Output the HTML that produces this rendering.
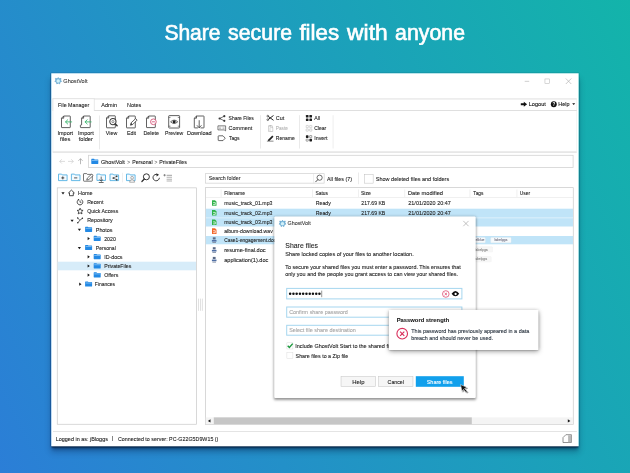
<!DOCTYPE html>
<html><head><meta charset="utf-8"><title>GhostVolt</title>
<style>
html,body{margin:0;padding:0;}
body{width:630px;height:473px;overflow:hidden;position:relative;font-family:"Liberation Sans",sans-serif;
background:linear-gradient(64deg, #2b7ed7 0%, #13b4aa 100%);}
#s{position:absolute;left:0;top:0;width:6300px;height:4730px;transform:scale(0.1);transform-origin:0 0;}
.b{position:absolute;box-sizing:border-box;}
.t{position:absolute;white-space:nowrap;-webkit-text-stroke-width:1px;line-height:100px;height:100px;transform-origin:0 50%;}
svg{overflow:visible;}
</style></head><body><div id="s">
<div class="t" style="font-size:220px;color:#fff;left:1645.0px;top:273.8px;transform:scaleX(0.9522);line-height:400px;height:400px;margin-top:-150px;-webkit-text-stroke-width:6.5px;">Share</div>
<div class="t" style="font-size:220px;color:#fff;left:2281.0px;top:273.8px;transform:scaleX(0.9692);line-height:400px;height:400px;margin-top:-150px;-webkit-text-stroke-width:6.5px;">secure</div>
<div class="t" style="font-size:220px;color:#fff;left:2994.0px;top:273.8px;transform:scaleX(1.0147);line-height:400px;height:400px;margin-top:-150px;-webkit-text-stroke-width:6.5px;">files</div>
<div class="t" style="font-size:220px;color:#fff;left:3471.0px;top:273.8px;transform:scaleX(1.0377);line-height:400px;height:400px;margin-top:-150px;-webkit-text-stroke-width:6.5px;">with</div>
<div class="t" style="font-size:220px;color:#fff;left:3951.0px;top:273.8px;transform:scaleX(0.9698);line-height:400px;height:400px;margin-top:-150px;-webkit-text-stroke-width:6.5px;">anyone</div>
<div class="b" style="left:513.0px;top:733.0px;width:5273.0px;height:3730.0px;background:#fff;box-shadow:0 -5px 6px rgba(0,45,85,.5),-6px 0 6px rgba(0,40,85,.4),0 14px 10px -3px rgba(0,25,60,.75),0 34px 30px -4px rgba(0,25,60,.6),0 60px 60px rgba(0,20,60,.3),0 0 14px rgba(0,20,55,.28);"></div>
<svg class="b" style="left:547.0px;top:773.0px;" width="70.0" height="70.0" viewBox="0 0 7 7"><path d="M3.5 0.3 L4.6 1.5 L6.3 1.1 L5.9 2.9 L6.9 4.1 L5.3 4.8 L4.9 6.6 L3.5 5.7 L2.1 6.6 L1.7 4.8 L0.1 4.1 L1.1 2.9 L0.7 1.1 L2.4 1.5 Z" fill="#7db9dc" stroke="#4e97c4" stroke-width="0.55" stroke-linejoin="round"/><circle cx="3.5" cy="3.7" r="1.7" fill="#d2f1fa"/></svg>
<div class="t" style="font-size:60px;color:#3a3a3a;left:633.0px;top:759.2px;transform:scaleX(0.9302);">GhostVolt</div>
<div class="b" style="left:5247.0px;top:809.0px;width:45.0px;height:6.0px;background:#b0b0b0;"></div>
<div class="b" style="left:5447.0px;top:787.0px;width:50.0px;height:50.0px;border:5px solid #b0b0b0;"></div>
<svg class="b" style="left:5658.0px;top:785.0px;" width="55.0" height="55.0" viewBox="0 0 5.5 5.5"><path d="M0 0 L5.5 5.5 M5.5 0 L0 5.5" stroke="#a8a8a8" stroke-width="0.6"/></svg>
<div class="b" style="left:527.0px;top:986.0px;width:5241.0px;height:539.0px;border:5px solid #d2d2d2;border-left-color:#e6e6e6;border-right-color:#ececec;border-bottom:9px solid #d0d0d0;border-top-width:7px;"></div>
<div class="b" style="left:530.0px;top:1102.0px;width:5238.0px;height:7.0px;background:#d2d2d2;"></div>
<div class="b" style="left:527.0px;top:986.0px;width:417.0px;height:124.0px;background:#fff;border:5px solid #d2d2d2;border-bottom:none;"></div>
<div class="t" style="font-size:60px;color:#222;left:580.0px;top:999.2px;transform:scaleX(0.8910);">File Manager</div>
<div class="t" style="font-size:60px;color:#222;left:1013.0px;top:999.2px;transform:scaleX(0.9231);">Admin</div>
<div class="t" style="font-size:60px;color:#222;left:1270.0px;top:999.2px;transform:scaleX(0.9123);">Notes</div>
<svg class="b" style="left:5208.0px;top:1016.0px;" width="64.0" height="52.0" viewBox="0 0 6.4 5.2"><path d="M0 1.6 H3 V0.1 L6.3 2.6 L3 5.1 V3.6 H0 Z" fill="#111"/></svg>
<div class="t" style="font-size:60px;color:#111;left:5287.0px;top:989.2px;transform:scaleX(0.9318);">Logout</div>
<svg class="b" style="left:5508.0px;top:1013.0px;" width="60.0" height="60.0" viewBox="0 0 6 6"><circle cx="3" cy="3" r="2.95" fill="#111"/><text x="3" y="4.8" font-size="4.6" font-weight="bold" fill="#fff" text-anchor="middle" font-family="Liberation Sans">?</text></svg>
<div class="t" style="font-size:60px;color:#111;left:5583.0px;top:989.2px;transform:scaleX(0.9076);">Help</div>
<svg class="b" style="left:5722.0px;top:1033.0px;" width="30.0" height="20.0" viewBox="0 0 3 2"><path d="M0 0 H3 L1.5 1.8 Z" fill="#111"/></svg>
<svg class="b" style="left:611.0px;top:1156.0px;" width="96.0" height="124.0" viewBox="0 0 9.6 12.4"><path d="M2.6 0.4 H8.799999999999999 Q9.2 0.4 9.2 0.8 V11.6 Q9.2 12.0 8.799999999999999 12.0 H0.8 Q0.4 12.0 0.4 11.6 V2.6 Z M2.6 0.4 V2.6 H0.4" fill="#fff" stroke="#3a3a3a" stroke-width="0.8" stroke-linejoin="round"/><path d="M10.6 6.3 H4.6 M6.6 4.2 L4.4 6.3 L6.6 8.4" fill="none" stroke="#35b56a" stroke-width="0.85" stroke-linecap="round" stroke-linejoin="round"/></svg>
<div class="t" style="font-size:60px;color:#222;left:573.5px;top:1279.2px;transform:scaleX(0.9233);">Import</div>
<div class="t" style="font-size:60px;color:#222;left:601.0px;top:1339.2px;transform:scaleX(0.9560);">files</div>
<svg class="b" style="left:800.0px;top:1156.0px;" width="106.0" height="124.0" viewBox="0 0 10.6 12.4"><path d="M3.6 0.4 H9.8 Q10.2 0.4 10.2 0.8 V11.6 Q10.2 12 9.8 12 H0.8 Q0.4 12 0.4 11.6 V9.8 Q0.4 9.3 0.9 9.3 H1.6 V2.6 Z M3.6 0.4 V2.6 H1.6" fill="#fff" stroke="#3a3a3a" stroke-width="0.8" stroke-linejoin="round"/><path d="M11.2 6.3 H5.2 M7.2 4.2 L5 6.3 L7.2 8.4" fill="none" stroke="#35b56a" stroke-width="0.85" stroke-linecap="round" stroke-linejoin="round"/></svg>
<div class="t" style="font-size:60px;color:#222;left:779.5px;top:1279.2px;transform:scaleX(0.9233);">Import</div>
<div class="t" style="font-size:60px;color:#222;left:787.0px;top:1339.2px;transform:scaleX(0.9461);">folder</div>
<div class="b" style="left:994.0px;top:1155.0px;width:5.0px;height:339.0px;background:#d4d4d4;"></div>
<svg class="b" style="left:1061.0px;top:1154.0px;" width="96.0" height="128.0" viewBox="0 0 9.6 12.8"><path d="M2.6 0.4 H8.799999999999999 Q9.2 0.4 9.2 0.8 V12.0 Q9.2 12.4 8.799999999999999 12.4 H0.8 Q0.4 12.4 0.4 12.0 V2.6 Z M2.6 0.4 V2.6 H0.4" fill="#fff" stroke="#3a3a3a" stroke-width="0.8" stroke-linejoin="round"/><circle cx="6.8" cy="6.2" r="3.1" fill="#fff" stroke="#3a3a3a" stroke-width="1.05"/><circle cx="6.8" cy="6.2" r="1.1" fill="none" stroke="#3a3a3a" stroke-width="0.55"/><path d="M9.1 8.5 L11 10.4" stroke="#3a3a3a" stroke-width="1.5" stroke-linecap="round"/></svg>
<div class="t" style="font-size:60px;color:#222;left:1057.5px;top:1279.2px;transform:scaleX(0.8917);">View</div>
<svg class="b" style="left:1261.0px;top:1156.0px;" width="96.0" height="127.0" viewBox="0 0 9.6 12.7"><path d="M2.6 0.4 H8.799999999999999 Q9.2 0.4 9.2 0.8 V11.899999999999999 Q9.2 12.299999999999999 8.799999999999999 12.299999999999999 H0.8 Q0.4 12.299999999999999 0.4 11.899999999999999 V2.6 Z M2.6 0.4 V2.6 H0.4" fill="#fff" stroke="#3a3a3a" stroke-width="0.8" stroke-linejoin="round"/><path d="M4.4 9.6 L5 7.2 L9.6 3 L11 4.5 L6.6 8.9 Z" fill="#fff" stroke="#3a3a3a" stroke-width="0.8" stroke-linejoin="round"/><path d="M4.4 9.6 L5 7.2 L6.6 8.9 Z" fill="#3a3a3a"/></svg>
<div class="t" style="font-size:60px;color:#222;left:1269.0px;top:1279.2px;transform:scaleX(0.8898);">Edit</div>
<svg class="b" style="left:1461.0px;top:1156.0px;" width="96.0" height="124.0" viewBox="0 0 9.6 12.4"><path d="M2.6 0.4 H8.799999999999999 Q9.2 0.4 9.2 0.8 V11.6 Q9.2 12.0 8.799999999999999 12.0 H0.8 Q0.4 12.0 0.4 11.6 V2.6 Z M2.6 0.4 V2.6 H0.4" fill="#fff" stroke="#3a3a3a" stroke-width="0.8" stroke-linejoin="round"/><circle cx="7.3" cy="6.2" r="2.85" fill="#fff" stroke="#d24a70" stroke-width="0.85"/><path d="M5.8 6.2 H8.8" stroke="#d24a70" stroke-width="0.85"/></svg>
<div class="t" style="font-size:60px;color:#222;left:1434.5px;top:1279.2px;transform:scaleX(0.8937);">Delete</div>
<svg class="b" style="left:1683.0px;top:1152.0px;" width="117.0" height="132.0" viewBox="0 0 11.7 13.2"><rect x="0.4" y="0.4" width="10.9" height="12.4" rx="0.6" fill="#fff" stroke="#3a3a3a" stroke-width="0.8"/><path d="M0.4 2.2 H2.2 M9.5 2.2 H11.3 M0.4 11 H2.2 M9.5 11 H11.3" stroke="#3a3a3a" stroke-width="0.6"/><path d="M2.3 6.6 Q5.85 3.2 9.4 6.6 Q5.85 10 2.3 6.6 Z" fill="#fff" stroke="#3a3a3a" stroke-width="0.75"/><circle cx="5.85" cy="6.6" r="1.5" fill="#222"/></svg>
<div class="t" style="font-size:60px;color:#222;left:1649.5px;top:1279.2px;transform:scaleX(0.8575);">Preview</div>
<svg class="b" style="left:1939.0px;top:1156.0px;" width="105.0" height="127.0" viewBox="0 0 10.5 12.7"><path d="M4 12.3 H0.8 Q0.4 12.3 0.4 11.9 V2.6 L2.6 0.4 H9.7 Q10.1 0.4 10.1 0.8 V11.9 Q10.1 12.3 9.7 12.3 H6.6 M2.6 0.4 V2.6 H0.4" fill="none" stroke="#3a3a3a" stroke-width="0.8" stroke-linejoin="round"/><path d="M5.3 5 V12 M3.3 10 L5.3 12.2 L7.3 10" fill="none" stroke="#3a3a3a" stroke-width="0.8" stroke-linecap="round" stroke-linejoin="round"/></svg>
<div class="t" style="font-size:60px;color:#222;left:1869.5px;top:1279.2px;transform:scaleX(0.9257);">Download</div>
<svg class="b" style="left:2183.0px;top:1151.0px;" width="74.0" height="68.0" viewBox="0 0 7.4 6.8"><path d="M1.3 3.4 L6 1.1 M1.3 3.4 L6 5.7" stroke="#3a3a3a" stroke-width="0.7"/><circle cx="1.3" cy="3.4" r="1.1" fill="#3a3a3a"/><circle cx="6" cy="1.1" r="1.1" fill="#3a3a3a"/><circle cx="6" cy="5.7" r="1.1" fill="#3a3a3a"/></svg>
<div class="t" style="font-size:60px;color:#222;left:2286.0px;top:1129.2px;transform:scaleX(0.8304);">Share Files</div>
<svg class="b" style="left:2176.0px;top:1255.0px;" width="84.0" height="58.0" viewBox="0 0 8.4 5.8"><path d="M0.35 0.35 H8 V5.4 L6.6 4.4 H0.35 Z" fill="#fff" stroke="#3a3a3a" stroke-width="0.65" stroke-linejoin="round"/><path d="M1.4 1.7 H3.6 M1.4 3 H3.6 M4.9 1.7 H6.9 M4.9 3 H6.9" stroke="#888" stroke-width="0.5"/></svg>
<div class="t" style="font-size:60px;color:#222;left:2286.0px;top:1229.2px;transform:scaleX(0.9113);">Comment</div>
<svg class="b" style="left:2178.0px;top:1354.0px;" width="78.0" height="56.0" viewBox="0 0 7.8 5.6"><path d="M0.9 0.4 H5.2 L7.4 2.8 L5.2 5.2 H0.9 Q0.4 5.2 0.4 4.7 V0.9 Q0.4 0.4 0.9 0.4 Z" fill="#fff" stroke="#3a3a3a" stroke-width="0.75" stroke-linejoin="round"/></svg>
<div class="t" style="font-size:60px;color:#222;left:2289.0px;top:1329.2px;transform:scaleX(0.8364);">Tags</div>
<div class="b" style="left:2605.0px;top:1152.0px;width:5.0px;height:333.0px;background:#d4d4d4;"></div>
<svg class="b" style="left:2667.0px;top:1150.0px;" width="70.0" height="58.0" viewBox="0 0 7 5.8"><path d="M1.7 1.5 L6.8 5.3 M1.7 4.3 L6.8 0.5" stroke="#1c1c1c" stroke-width="0.95"/><circle cx="1.1" cy="1.1" r="0.85" fill="none" stroke="#1c1c1c" stroke-width="0.6"/><circle cx="1.1" cy="4.7" r="0.85" fill="none" stroke="#1c1c1c" stroke-width="0.6"/></svg>
<div class="t" style="font-size:60px;color:#222;left:2758.0px;top:1129.2px;transform:scaleX(0.9104);">Cut</div>
<svg class="b" style="left:2680.0px;top:1250.0px;" width="50.0" height="66.0" viewBox="0 0 5 6.6"><rect x="0.3" y="0.9" width="4.2" height="5.3" fill="#fff" stroke="#b5b5b5" stroke-width="0.55"/><rect x="1.4" y="0.2" width="2" height="1.3" fill="#b5b5b5"/><rect x="2" y="2.8" width="2.9" height="3.6" fill="#fff" stroke="#b5b5b5" stroke-width="0.5"/></svg>
<div class="t" style="font-size:60px;color:#b3b3b3;left:2758.0px;top:1229.2px;transform:scaleX(0.7821);">Paste</div>
<svg class="b" style="left:2667.0px;top:1352.0px;" width="74.0" height="62.0" viewBox="0 0 7.4 6.2"><path d="M1.6 4.4 L5.6 0.4 L6.8 1.6 L2.9 5.5 L1.2 5.9 Z" fill="#222"/><path d="M0.2 5.95 H6.8" stroke="#222" stroke-width="0.55"/></svg>
<div class="t" style="font-size:60px;color:#222;left:2758.0px;top:1329.2px;transform:scaleX(0.8334);">Rename</div>
<div class="b" style="left:2995.0px;top:1152.0px;width:5.0px;height:333.0px;background:#d4d4d4;"></div>
<svg class="b" style="left:3058.0px;top:1148.0px;" width="64.0" height="64.0" viewBox="0 0 6.4 6.4"><rect x="0.1" y="0.1" width="2.6" height="2.6" rx="0.6" fill="#1c1c1c"/><rect x="3.6" y="0.1" width="2.6" height="2.6" rx="0.6" fill="#1c1c1c"/><rect x="0.1" y="3.6" width="2.6" height="2.6" rx="0.6" fill="#1c1c1c"/><rect x="3.6" y="3.6" width="2.6" height="2.6" rx="0.6" fill="#1c1c1c"/></svg>
<div class="t" style="font-size:60px;color:#222;left:3142.0px;top:1129.2px;transform:scaleX(0.8698);">All</div>
<svg class="b" style="left:3058.0px;top:1251.0px;" width="64.0" height="64.0" viewBox="0 0 6.4 6.4"><rect x="0.35" y="0.35" width="2.2" height="2.2" rx="0.3" fill="#fff" stroke="#aaa" stroke-width="0.45"/><rect x="3.85" y="0.35" width="2.2" height="2.2" rx="0.3" fill="#fff" stroke="#aaa" stroke-width="0.45"/><rect x="0.35" y="3.85" width="2.2" height="2.2" rx="0.3" fill="#fff" stroke="#aaa" stroke-width="0.45"/><rect x="3.85" y="3.85" width="2.2" height="2.2" rx="0.3" fill="#fff" stroke="#aaa" stroke-width="0.45"/></svg>
<div class="t" style="font-size:60px;color:#222;left:3142.0px;top:1229.2px;transform:scaleX(0.8369);">Clear</div>
<svg class="b" style="left:3058.0px;top:1352.0px;" width="64.0" height="64.0" viewBox="0 0 6.4 6.4"><rect x="0.1" y="0.1" width="2.6" height="2.6" rx="0.6" fill="#1c1c1c"/><rect x="3.85" y="0.35" width="2.1" height="2.1" rx="0.3" fill="#fff" stroke="#333" stroke-width="0.45"/><rect x="0.35" y="3.85" width="2.1" height="2.1" rx="0.3" fill="#fff" stroke="#333" stroke-width="0.45"/><rect x="3.6" y="3.6" width="2.6" height="2.6" rx="0.6" fill="#1c1c1c"/></svg>
<div class="t" style="font-size:60px;color:#222;left:3142.0px;top:1329.2px;transform:scaleX(0.8863);">Invert</div>
<div class="b" style="left:3328.0px;top:1152.0px;width:5.0px;height:333.0px;background:#dcdcdc;"></div>
<svg class="b" style="left:592.0px;top:1589.0px;" width="60.0" height="50.0" viewBox="0 0 6 5"><path d="M5.8 2.5 H0.5 M2.6 0.4 L0.5 2.5 L2.6 4.6" fill="none" stroke="#c4c4c4" stroke-width="0.6"/></svg>
<svg class="b" style="left:678.0px;top:1589.0px;" width="60.0" height="50.0" viewBox="0 0 6 5"><path d="M0.2 2.5 H5.5 M3.4 0.4 L5.5 2.5 L3.4 4.6" fill="none" stroke="#c4c4c4" stroke-width="0.6"/></svg>
<svg class="b" style="left:780.0px;top:1582.0px;" width="50.0" height="62.0" viewBox="0 0 5 6.2"><path d="M2.5 6 V0.5 M0.4 2.6 L2.5 0.5 L4.6 2.6" fill="none" stroke="#8a8a8a" stroke-width="0.6"/></svg>
<div class="b" style="left:880.0px;top:1549.0px;width:4855.0px;height:130.0px;border:8px solid #d3d3d3;background:#fff;"></div>
<svg class="b" style="left:913.0px;top:1588.0px;" width="70.0" height="52.0" viewBox="0 0 7 5.2"><path d="M0 0.5 Q0 0 0.5 0 H2.8000000000000003 L3.29 0.6 H6.6 Q7 0.6 7 1 V4.8 Q7 5.2 6.6 5.2 H0.4 Q0 5.2 0 4.8 Z" fill="#2389e4"/><rect x="0.5" y="1.2" width="6" height="0.8" fill="#8cc6f6"/></svg>
<div class="t" style="font-size:60px;color:#222;left:1009.0px;top:1569.2px;transform:scaleX(0.9225);">GhostVolt</div>
<div class="t" style="font-size:60px;color:#666;left:1273.0px;top:1569.2px;transform:scaleX(0.7991);">&gt;</div>
<div class="t" style="font-size:60px;color:#222;left:1322.0px;top:1569.2px;transform:scaleX(0.8615);">Personal</div>
<div class="t" style="font-size:60px;color:#666;left:1544.0px;top:1569.2px;transform:scaleX(0.7991);">&gt;</div>
<div class="t" style="font-size:60px;color:#222;left:1593.0px;top:1569.2px;transform:scaleX(0.8806);">PrivateFiles</div>
<svg class="b" style="left:580.0px;top:1736.0px;" width="96.0" height="75.0" viewBox="0 0 9.6 7.5"><path d="M0.5 0.5 H3.6 L4.2 1.3 H9.1 V7.0 H0.5 Z" fill="#f4fafe" stroke="#4daee2" stroke-width="0.85" stroke-linejoin="round"/><path d="M3.3 4.3 H6.3 M4.8 2.8 V5.8" stroke="#2a2a2a" stroke-width="0.8"/></svg>
<svg class="b" style="left:709.0px;top:1736.0px;" width="96.0" height="75.0" viewBox="0 0 9.6 7.5"><path d="M0.5 0.5 H3.6 L4.2 1.3 H9.1 V7.0 H0.5 Z" fill="#f4fafe" stroke="#4daee2" stroke-width="0.85" stroke-linejoin="round"/><path d="M3.2 4.3 H6.4" stroke="#2a2a2a" stroke-width="0.8"/></svg>
<svg class="b" style="left:831.0px;top:1732.0px;" width="106.0" height="86.0" viewBox="0 0 10.6 8.6"><path d="M0.4 0.9 Q0.4 0.4 0.9 0.4 H3.6 L4.3 1.2 H8.7 Q9.2 1.2 9.2 1.7 V7.5 Q9.2 8 8.7 8 H0.9 Q0.4 8 0.4 7.5 Z" fill="#fff" stroke="#4a4a4a" stroke-width="0.75" stroke-linejoin="round"/><path d="M3.6 6.9 L4.3 4.8 L8.6 0.9 L10 2.3 L5.8 6.3 Z" fill="#fff" stroke="#3a3a3a" stroke-width="0.7" stroke-linejoin="round"/></svg>
<svg class="b" style="left:964.0px;top:1736.0px;" width="96.0" height="73.0" viewBox="0 0 9.6 7.3"><path d="M0.5 0.5 H3.6 L4.2 1.3 H9.1 V6.8 H0.5 Z" fill="#f4fafe" stroke="#4daee2" stroke-width="0.85" stroke-linejoin="round"/><path d="M4.8 3 V7.6 M3 5.9 L4.8 7.7 L6.6 5.9 M2.4 8.9 H7.2" fill="none" stroke="#3a3a3a" stroke-width="0.75"/></svg>
<svg class="b" style="left:1095.0px;top:1736.0px;" width="96.0" height="75.0" viewBox="0 0 9.6 7.5"><path d="M0.5 0.5 H3.6 L4.2 1.3 H9.1 V7.0 H0.5 Z" fill="#f4fafe" stroke="#4daee2" stroke-width="0.85" stroke-linejoin="round"/><path d="M3.8 4.4 L7.2 2.7 M3.8 4.4 L7.2 6.1" stroke="#3a3a3a" stroke-width="0.6"/><circle cx="3.8" cy="4.4" r="0.85" fill="#3a3a3a"/><circle cx="7.2" cy="2.7" r="0.85" fill="#3a3a3a"/><circle cx="7.2" cy="6.1" r="0.85" fill="#3a3a3a"/></svg>
<div class="b" style="left:1225.0px;top:1728.0px;width:5.0px;height:96.0px;background:#dedede;"></div>
<svg class="b" style="left:1260.0px;top:1736.0px;" width="96.0" height="75.0" viewBox="0 0 9.6 7.5"><path d="M0.5 0.5 H3.6 L4.2 1.3 H9.1 V7.0 H0.5 Z" fill="#f4fafe" stroke="#4daee2" stroke-width="0.85" stroke-linejoin="round"/><circle cx="6.1" cy="4.2" r="1.35" fill="#fff" stroke="#777" stroke-width="0.6"/><path d="M3.6 8.6 Q3.6 6.2 6.1 6.2 Q8.6 6.2 8.6 8.6 Z" fill="#fff" stroke="#777" stroke-width="0.6"/></svg>
<svg class="b" style="left:1413.0px;top:1732.0px;" width="86.0" height="88.0" viewBox="0 0 8.6 8.8"><circle cx="5.1" cy="3.6" r="3" fill="none" stroke="#2a2a2a" stroke-width="0.95"/><path d="M3 5.8 L0.6 8.3" stroke="#2a2a2a" stroke-width="1.2" stroke-linecap="round"/></svg>
<svg class="b" style="left:1520.0px;top:1732.0px;" width="86.0" height="86.0" viewBox="0 0 8.6 8.6"><path d="M7.4 4.6 A3.2 3.2 0 1 1 5.6 1.5" fill="none" stroke="#2a2a2a" stroke-width="0.9"/><path d="M4.4 0 L7 1.6 L4.6 3.4 Z" fill="#2a2a2a"/></svg>
<svg class="b" style="left:1630.0px;top:1740.0px;" width="92.0" height="74.0" viewBox="0 0 9.2 7.4"><path d="M1.6 0 V2.4 M0.4 1.2 H2.8" stroke="#555" stroke-width="0.6"/><path d="M3.6 1.4 H9 M3.6 3.3 H9 M3.6 5.2 H9 M3.6 7 H9" stroke="#b4b4b4" stroke-width="1.1"/></svg>
<div class="b" style="left:2052.0px;top:1733.0px;width:1193.0px;height:102.0px;border:7px solid #d0d0d0;background:#fff;"></div>
<div class="b" style="left:3134.0px;top:1732.0px;width:5.0px;height:102.0px;background:#dedede;"></div>
<div class="t" style="font-size:60px;color:#333;left:2088.0px;top:1729.2px;transform:scaleX(0.8855);">Search folder</div>
<svg class="b" style="left:3152.0px;top:1746.0px;" width="74.0" height="76.0" viewBox="0 0 7.4 7.6"><circle cx="4.4" cy="3.1" r="2.6" fill="none" stroke="#333" stroke-width="0.7"/><path d="M2.6 5.1 L0.5 7.2" stroke="#333" stroke-width="0.9" stroke-linecap="round"/></svg>
<div class="t" style="font-size:60px;color:#222;left:3270.0px;top:1739.2px;transform:scaleX(0.8927);">All files (7)</div>
<div class="b" style="left:3584.0px;top:1725.0px;width:5.0px;height:117.0px;background:#d6d6d6;"></div>
<div class="b" style="left:3642.0px;top:1742.0px;width:92.0px;height:92.0px;border:5px solid #bdbdbd;background:#fff;"></div>
<div class="t" style="font-size:60px;color:#222;left:3758.0px;top:1739.2px;transform:scaleX(0.9169);">Show deleted files and folders</div>
<div class="b" style="left:569.0px;top:1875.0px;width:1398.0px;height:2371.0px;border:7px solid #c8c8c8;background:#fff;"></div>
<div class="b" style="left:576.0px;top:2616.6px;width:1384.0px;height:86.0px;background:#d7ecf9;"></div>
<svg class="b" style="left:614.0px;top:1923.0px;" width="32.0" height="24.0" viewBox="0 0 3.2 2.4"><path d="M0 0 H3.2 L1.6 2.3 Z" fill="#1a1a1a"/></svg>
<svg class="b" style="left:680.0px;top:1896.0px;" width="68.0" height="66.0" viewBox="0 0 6.8 6.6"><path d="M0.5 3.3 L3.4 0.5 L6.3 3.3 H5.3 V6.1 H1.5 V3.3 Z" fill="#fff" stroke="#2a2a2a" stroke-width="0.85" stroke-linejoin="round"/></svg>
<div class="t" style="font-size:60px;color:#222;left:780.0px;top:1879.2px;transform:scaleX(0.9060);">Home</div>
<svg class="b" style="left:767.0px;top:1987.2px;" width="66.0" height="68.0" viewBox="0 0 6.6 6.8"><path d="M4.6 0.9 A2.8 2.8 0 1 1 2 0.9" fill="none" stroke="#2a2a2a" stroke-width="0.85"/><path d="M3.3 1.6 V3.6 H4.7" fill="none" stroke="#2a2a2a" stroke-width="0.7"/><path d="M0.9 0.2 L2.6 0.5 L2 2 Z" fill="#2a2a2a"/></svg>
<div class="t" style="font-size:60px;color:#222;left:872.0px;top:1969.2px;transform:scaleX(0.8469);">Recent</div>
<svg class="b" style="left:767.0px;top:2077.4px;" width="68.0" height="66.0" viewBox="0 0 6.8 6.6"><path d="M3.4 0.5 L4.3 2.5 L6.4 2.7 L4.8 4.1 L5.3 6.2 L3.4 5.1 L1.5 6.2 L2 4.1 L0.4 2.7 L2.5 2.5 Z" fill="#fff" stroke="#2a2a2a" stroke-width="0.8" stroke-linejoin="round"/></svg>
<div class="t" style="font-size:60px;color:#222;left:872.0px;top:2059.2px;transform:scaleX(0.8636);">Quick Access</div>
<svg class="b" style="left:705.0px;top:2196.6px;" width="32.0" height="24.0" viewBox="0 0 3.2 2.4"><path d="M0 0 H3.2 L1.6 2.3 Z" fill="#1a1a1a"/></svg>
<svg class="b" style="left:767.0px;top:2171.6px;" width="66.0" height="64.0" viewBox="0 0 6.6 6.4"><path d="M1.2 5.6 L3.2 3 L1 0.8 M3.2 3 L5.6 1.2" fill="none" stroke="#222" stroke-width="0.7"/><circle cx="1" cy="0.8" r="0.7" fill="#222"/><circle cx="5.7" cy="1.1" r="0.7" fill="#222"/><circle cx="1.1" cy="5.6" r="0.7" fill="#222"/></svg>
<div class="t" style="font-size:60px;color:#222;left:872.0px;top:2149.2px;transform:scaleX(0.8926);">Repository</div>
<svg class="b" style="left:778.0px;top:2287.8px;" width="32.0" height="24.0" viewBox="0 0 3.2 2.4"><path d="M0 0 H3.2 L1.6 2.3 Z" fill="#1a1a1a"/></svg>
<svg class="b" style="left:851.0px;top:2266.8px;" width="70.0" height="52.0" viewBox="0 0 7 5.2"><path d="M0 0.5 Q0 0 0.5 0 H2.8000000000000003 L3.29 0.6 H6.6 Q7 0.6 7 1 V4.8 Q7 5.2 6.6 5.2 H0.4 Q0 5.2 0 4.8 Z" fill="#2389e4"/><rect x="0.5" y="1.2" width="6" height="0.8" fill="#8cc6f6"/></svg>
<div class="t" style="font-size:60px;color:#222;left:958.0px;top:2249.2px;transform:scaleX(0.8940);">Photos</div>
<svg class="b" style="left:876.0px;top:2370.0px;" width="24.0" height="32.0" viewBox="0 0 2.4 3.2"><path d="M0 0 L2.3 1.6 L0 3.2 Z" fill="#1a1a1a"/></svg>
<svg class="b" style="left:937.0px;top:2358.0px;" width="70.0" height="52.0" viewBox="0 0 7 5.2"><path d="M0 0.5 Q0 0 0.5 0 H2.8000000000000003 L3.29 0.6 H6.6 Q7 0.6 7 1 V4.8 Q7 5.2 6.6 5.2 H0.4 Q0 5.2 0 4.8 Z" fill="#2389e4"/><rect x="0.5" y="1.2" width="6" height="0.8" fill="#8cc6f6"/></svg>
<div class="t" style="font-size:60px;color:#222;left:1042.0px;top:2339.2px;transform:scaleX(0.8691);">2020</div>
<svg class="b" style="left:778.0px;top:2470.2px;" width="32.0" height="24.0" viewBox="0 0 3.2 2.4"><path d="M0 0 H3.2 L1.6 2.3 Z" fill="#1a1a1a"/></svg>
<svg class="b" style="left:851.0px;top:2449.2px;" width="70.0" height="52.0" viewBox="0 0 7 5.2"><path d="M0 0.5 Q0 0 0.5 0 H2.8000000000000003 L3.29 0.6 H6.6 Q7 0.6 7 1 V4.8 Q7 5.2 6.6 5.2 H0.4 Q0 5.2 0 4.8 Z" fill="#2389e4"/><rect x="0.5" y="1.2" width="6" height="0.8" fill="#8cc6f6"/></svg>
<div class="t" style="font-size:60px;color:#222;left:958.0px;top:2429.2px;transform:scaleX(0.8446);">Personal</div>
<svg class="b" style="left:876.0px;top:2552.4px;" width="24.0" height="32.0" viewBox="0 0 2.4 3.2"><path d="M0 0 L2.3 1.6 L0 3.2 Z" fill="#1a1a1a"/></svg>
<svg class="b" style="left:937.0px;top:2540.4px;" width="70.0" height="52.0" viewBox="0 0 7 5.2"><path d="M0 0.5 Q0 0 0.5 0 H2.8000000000000003 L3.29 0.6 H6.6 Q7 0.6 7 1 V4.8 Q7 5.2 6.6 5.2 H0.4 Q0 5.2 0 4.8 Z" fill="#2389e4"/><rect x="0.5" y="1.2" width="6" height="0.8" fill="#8cc6f6"/></svg>
<div class="t" style="font-size:60px;color:#222;left:1042.0px;top:2519.2px;transform:scaleX(0.8853);">ID-docs</div>
<svg class="b" style="left:876.0px;top:2643.6px;" width="24.0" height="32.0" viewBox="0 0 2.4 3.2"><path d="M0 0 L2.3 1.6 L0 3.2 Z" fill="#1a1a1a"/></svg>
<svg class="b" style="left:937.0px;top:2631.6px;" width="70.0" height="52.0" viewBox="0 0 7 5.2"><path d="M0 0.5 Q0 0 0.5 0 H2.8000000000000003 L3.29 0.6 H6.6 Q7 0.6 7 1 V4.8 Q7 5.2 6.6 5.2 H0.4 Q0 5.2 0 4.8 Z" fill="#2389e4"/><rect x="0.5" y="1.2" width="6" height="0.8" fill="#8cc6f6"/></svg>
<div class="t" style="font-size:60px;color:#222;left:1042.0px;top:2609.2px;transform:scaleX(0.8647);">PrivateFiles</div>
<svg class="b" style="left:876.0px;top:2734.8px;" width="24.0" height="32.0" viewBox="0 0 2.4 3.2"><path d="M0 0 L2.3 1.6 L0 3.2 Z" fill="#1a1a1a"/></svg>
<svg class="b" style="left:937.0px;top:2722.8px;" width="70.0" height="52.0" viewBox="0 0 7 5.2"><path d="M0 0.5 Q0 0 0.5 0 H2.8000000000000003 L3.29 0.6 H6.6 Q7 0.6 7 1 V4.8 Q7 5.2 6.6 5.2 H0.4 Q0 5.2 0 4.8 Z" fill="#2389e4"/><rect x="0.5" y="1.2" width="6" height="0.8" fill="#8cc6f6"/></svg>
<div class="t" style="font-size:60px;color:#222;left:1042.0px;top:2699.2px;transform:scaleX(0.8689);">Offers</div>
<svg class="b" style="left:792.0px;top:2826.0px;" width="24.0" height="32.0" viewBox="0 0 2.4 3.2"><path d="M0 0 L2.3 1.6 L0 3.2 Z" fill="#1a1a1a"/></svg>
<svg class="b" style="left:851.0px;top:2814.0px;" width="70.0" height="52.0" viewBox="0 0 7 5.2"><path d="M0 0.5 Q0 0 0.5 0 H2.8000000000000003 L3.29 0.6 H6.6 Q7 0.6 7 1 V4.8 Q7 5.2 6.6 5.2 H0.4 Q0 5.2 0 4.8 Z" fill="#2389e4"/><rect x="0.5" y="1.2" width="6" height="0.8" fill="#8cc6f6"/></svg>
<div class="t" style="font-size:60px;color:#222;left:948.0px;top:2789.2px;transform:scaleX(0.8297);">Finances</div>
<div class="b" style="left:1982.0px;top:2986.0px;width:8.0px;height:122.0px;background:#dadada;"></div>
<div class="b" style="left:2002.0px;top:2986.0px;width:8.0px;height:122.0px;background:#dadada;"></div>
<div class="b" style="left:2019.0px;top:2986.0px;width:8.0px;height:122.0px;background:#dadada;"></div>
<div class="b" style="left:2052.0px;top:1873.0px;width:3684.0px;height:2375.0px;border:7px solid #c8c8c8;background:#fff;"></div>
<div class="b" style="left:2058.0px;top:1974.0px;width:3672.0px;height:5.0px;background:#e0e0e0;"></div>
<div class="b" style="left:2208.0px;top:1895.0px;width:5.0px;height:75.0px;background:#e0e0e0;"></div>
<div class="b" style="left:3120.0px;top:1895.0px;width:5.0px;height:75.0px;background:#e0e0e0;"></div>
<div class="b" style="left:3584.0px;top:1895.0px;width:5.0px;height:75.0px;background:#e0e0e0;"></div>
<div class="b" style="left:4046.0px;top:1895.0px;width:5.0px;height:75.0px;background:#e0e0e0;"></div>
<div class="b" style="left:4697.0px;top:1895.0px;width:5.0px;height:75.0px;background:#e0e0e0;"></div>
<div class="b" style="left:5167.0px;top:1895.0px;width:5.0px;height:75.0px;background:#e0e0e0;"></div>
<div class="t" style="font-size:60px;color:#222;left:2242.0px;top:1879.2px;transform:scaleX(0.8429);">Filename</div>
<div class="t" style="font-size:60px;color:#222;left:3154.0px;top:1879.2px;transform:scaleX(0.8212);">Satus</div>
<div class="t" style="font-size:60px;color:#222;left:3609.0px;top:1879.2px;transform:scaleX(0.8482);">Size</div>
<div class="t" style="font-size:60px;color:#222;left:4080.0px;top:1879.2px;transform:scaleX(0.9454);">Date modified</div>
<div class="t" style="font-size:60px;color:#222;left:4733.0px;top:1879.2px;transform:scaleX(0.7890);">Tags</div>
<div class="t" style="font-size:60px;color:#222;left:5197.0px;top:1879.2px;transform:scaleX(0.8131);">User</div>
<div class="b" style="left:2058.0px;top:2168.0px;width:3672.0px;height:15.0px;background:#d3ecfa;"></div>
<div class="b" style="left:2058.0px;top:2086.5px;width:3672.0px;height:83.0px;background:#c0e4f8;"></div>
<div class="b" style="left:2058.0px;top:2181.5px;width:3672.0px;height:83.0px;background:#c0e4f8;"></div>
<div class="b" style="left:2058.0px;top:2359.5px;width:3672.0px;height:83.0px;background:#c0e4f8;"></div>
<svg class="b" style="left:2117.0px;top:2000.0px;" width="50.0" height="60.0" viewBox="0 0 5 6"><path d="M0.3 0.2 H3.3 L4.8 1.7 V5.8 H0.3 Z" fill="#2fb34a"/><path d="M1.4 2.6 H3.6 V4.6 H1.4" fill="none" stroke="#fff" stroke-width="0.7"/></svg>
<div class="t" style="font-size:60px;color:#222;left:2242.0px;top:1979.2px;transform:scaleX(0.8725);">music_track_01.mp3</div>
<svg class="b" style="left:2117.0px;top:2098.0px;" width="50.0" height="60.0" viewBox="0 0 5 6"><path d="M0.3 0.2 H3.3 L4.8 1.7 V5.8 H0.3 Z" fill="#2fb34a"/><path d="M1.4 2.6 H3.6 V4.6 H1.4" fill="none" stroke="#fff" stroke-width="0.7"/></svg>
<div class="t" style="font-size:60px;color:#222;left:2242.0px;top:2079.2px;transform:scaleX(0.8725);">music_track_02.mp3</div>
<svg class="b" style="left:2117.0px;top:2193.0px;" width="50.0" height="60.0" viewBox="0 0 5 6"><path d="M0.3 0.2 H3.3 L4.8 1.7 V5.8 H0.3 Z" fill="#2fb34a"/><path d="M1.4 2.6 H3.6 V4.6 H1.4" fill="none" stroke="#fff" stroke-width="0.7"/></svg>
<div class="t" style="font-size:60px;color:#222;left:2242.0px;top:2169.2px;transform:scaleX(0.8725);">music_track_03.mp3</div>
<svg class="b" style="left:2117.0px;top:2281.0px;" width="50.0" height="60.0" viewBox="0 0 5 6"><path d="M0.3 0.2 H3.3 L4.8 1.7 V5.8 H0.3 Z" fill="#f2672a"/><path d="M1.4 2.6 H3.6 V4.6 H1.4" fill="none" stroke="#fff" stroke-width="0.7"/></svg>
<div class="t" style="font-size:60px;color:#222;left:2242.0px;top:2259.2px;transform:scaleX(0.8622);">album-download.wav</div>
<svg class="b" style="left:2115.0px;top:2371.0px;" width="54.0" height="60.0" viewBox="0 0 5.4 6"><rect x="1.3" y="0.2" width="2.8" height="2.2" fill="#5a6a86"/><rect x="0.4" y="2.9" width="4.6" height="1.6" fill="#4f6fa5"/><rect x="0.9" y="4.9" width="3.6" height="1" fill="#8895ab"/></svg>
<div class="t" style="font-size:60px;color:#222;left:2242.0px;top:2349.2px;transform:scaleX(0.8120);">Case1-engagement.doc</div>
<svg class="b" style="left:2115.0px;top:2470.0px;" width="54.0" height="60.0" viewBox="0 0 5.4 6"><rect x="1.3" y="0.2" width="2.8" height="2.2" fill="#5a6a86"/><rect x="0.4" y="2.9" width="4.6" height="1.6" fill="#4f6fa5"/><rect x="0.9" y="4.9" width="3.6" height="1" fill="#8895ab"/></svg>
<div class="t" style="font-size:60px;color:#222;left:2242.0px;top:2449.2px;transform:scaleX(0.9334);">resume-final.doc</div>
<svg class="b" style="left:2115.0px;top:2567.0px;" width="54.0" height="60.0" viewBox="0 0 5.4 6"><rect x="1.3" y="0.2" width="2.8" height="2.2" fill="#5a6a86"/><rect x="0.4" y="2.9" width="4.6" height="1.6" fill="#4f6fa5"/><rect x="0.9" y="4.9" width="3.6" height="1" fill="#8895ab"/></svg>
<div class="t" style="font-size:60px;color:#222;left:2242.0px;top:2549.2px;transform:scaleX(0.9311);">application(1).doc</div>
<div class="t" style="font-size:60px;color:#222;left:3158.0px;top:1979.2px;transform:scaleX(0.8649);">Ready</div>
<div class="t" style="font-size:60px;color:#222;left:3613.0px;top:1979.2px;transform:scaleX(0.8565);">217.69 KB</div>
<div class="t" style="font-size:60px;color:#222;left:4083.0px;top:1979.2px;transform:scaleX(0.9098);">21/01/2020 20:47</div>
<div class="t" style="font-size:60px;color:#222;left:3158.0px;top:2079.2px;transform:scaleX(0.8649);">Ready</div>
<div class="t" style="font-size:60px;color:#222;left:3613.0px;top:2079.2px;transform:scaleX(0.8565);">217.69 KB</div>
<div class="t" style="font-size:60px;color:#222;left:4083.0px;top:2079.2px;transform:scaleX(0.9098);">21/01/2020 20:47</div>
<div class="b" style="left:4700.0px;top:2373.0px;width:154.0px;height:56.0px;background:#f6fafc;border-radius:6px;border:3px solid #ebebeb;"></div>
<div class="t" style="font-size:34px;color:#778;left:4708.9px;top:2348.2px;">labelblue</div>
<div class="b" style="left:4906.0px;top:2373.0px;width:206.0px;height:56.0px;background:#f6fafc;border-radius:6px;border:3px solid #ebebeb;"></div>
<div class="t" style="font-size:34px;color:#778;left:4944.7px;top:2348.2px;">labelpga</div>
<div class="b" style="left:4700.0px;top:2466.0px;width:226.0px;height:56.0px;background:#f7f7f7;border-radius:6px;border:3px solid #ebebeb;"></div>
<div class="t" style="font-size:34px;color:#8a8a8a;left:4748.7px;top:2448.2px;">labelpga</div>
<div class="b" style="left:4700.0px;top:2564.0px;width:214.0px;height:56.0px;background:#f7f7f7;border-radius:6px;border:3px solid #ebebeb;"></div>
<div class="t" style="font-size:34px;color:#8a8a8a;left:4742.7px;top:2538.2px;">labelpga</div>
<div class="b" style="left:2058.0px;top:4174.0px;width:3672.0px;height:68.0px;background:#f4f4f4;"></div>
<div class="b" style="left:2138.0px;top:4174.0px;width:2580.0px;height:68.0px;background:#c6c6c6;"></div>
<svg class="b" style="left:2079.0px;top:4192.0px;" width="27.0" height="34.0" viewBox="0 0 2.7 3.4"><path d="M2.6 0 L0 1.7 L2.6 3.4 Z" fill="#1a1a1a"/></svg>
<svg class="b" style="left:5678.0px;top:4192.0px;" width="27.0" height="34.0" viewBox="0 0 2.7 3.4"><path d="M0 0 L2.6 1.7 L0 3.4 Z" fill="#1a1a1a"/></svg>
<div class="b" style="left:530.0px;top:4314.0px;width:5238.0px;height:6.0px;background:#d2d2d2;"></div>
<div class="t" style="font-size:60px;color:#222;left:557.0px;top:4339.2px;transform:scaleX(0.9098);">Logged in as: jBloggs</div>
<div class="t" style="font-size:60px;color:#222;left:1118.0px;top:4329.2px;transform:scaleX(0.8982);">|</div>
<div class="t" style="font-size:60px;color:#222;left:1180.0px;top:4339.2px;transform:scaleX(0.8908);">Connected to server: PC-G22G5D9W15 ()</div>
<svg class="b" style="left:5625.0px;top:4342.0px;" width="94.0" height="88.0" viewBox="0 0 9.4 8.8"><path d="M3.4 0.5 H8.9 V8.3 H0.5 V3.4 Z" fill="#fff" stroke="#777" stroke-width="0.8" stroke-linejoin="round"/><rect x="5.6" y="1" width="3" height="7" fill="#b8b8b8"/></svg>
<div class="b" style="left:2744.0px;top:2166.0px;width:2012.0px;height:1814.0px;background:#fff;border-radius:10px;box-shadow:0 18px 28px rgba(0,0,0,.34),0 0 30px 2px rgba(0,0,0,.17);"></div>
<svg class="b" style="left:2790.0px;top:2200.0px;" width="70.0" height="70.0" viewBox="0 0 7 7"><path d="M3.5 0.3 L4.6 1.5 L6.3 1.1 L5.9 2.9 L6.9 4.1 L5.3 4.8 L4.9 6.6 L3.5 5.7 L2.1 6.6 L1.7 4.8 L0.1 4.1 L1.1 2.9 L0.7 1.1 L2.4 1.5 Z" fill="#7db9dc" stroke="#4e97c4" stroke-width="0.55" stroke-linejoin="round"/><circle cx="3.5" cy="3.7" r="1.7" fill="#d2f1fa"/></svg>
<div class="t" style="font-size:60px;color:#3a3a3a;left:2875.0px;top:2179.2px;transform:scaleX(0.8956);">GhostVolt</div>
<svg class="b" style="left:4633.0px;top:2209.0px;" width="53.0" height="53.0" viewBox="0 0 5.3 5.3"><path d="M0 0 L5.3 5.3 M5.3 0 L0 5.3" stroke="#9a9a9a" stroke-width="0.6"/></svg>
<div class="t" style="font-size:77px;color:#1c1c1c;left:2853.0px;top:2403.3px;transform:scaleX(0.8989);">Share files</div>
<div class="t" style="font-size:60px;color:#222;left:2853.0px;top:2489.2px;transform:scaleX(0.9232);">Share locked copies of your files to another location.</div>
<div class="t" style="font-size:60px;color:#222;left:2853.0px;top:2619.2px;transform:scaleX(0.9016);">To secure your shared files you must enter a password. This ensures that</div>
<div class="t" style="font-size:60px;color:#222;left:2853.0px;top:2689.2px;transform:scaleX(0.9100);">only you and the people you grant access to can view your shared files.</div>
<div class="b" style="left:2862.0px;top:2879.0px;width:1762.0px;height:115.0px;border:10px solid #a6d6ef;background:#fff;"></div>
<div class="b" style="left:2889px;top:2926px;width:25px;height:25px;border-radius:50%;background:#111;"></div>
<div class="b" style="left:2922px;top:2926px;width:25px;height:25px;border-radius:50%;background:#111;"></div>
<div class="b" style="left:2954px;top:2926px;width:25px;height:25px;border-radius:50%;background:#111;"></div>
<div class="b" style="left:2987px;top:2926px;width:25px;height:25px;border-radius:50%;background:#111;"></div>
<div class="b" style="left:3019px;top:2926px;width:25px;height:25px;border-radius:50%;background:#111;"></div>
<div class="b" style="left:3052px;top:2926px;width:25px;height:25px;border-radius:50%;background:#111;"></div>
<div class="b" style="left:3085px;top:2926px;width:25px;height:25px;border-radius:50%;background:#111;"></div>
<div class="b" style="left:3117px;top:2926px;width:25px;height:25px;border-radius:50%;background:#111;"></div>
<div class="b" style="left:3150px;top:2926px;width:25px;height:25px;border-radius:50%;background:#111;"></div>
<div class="b" style="left:3182px;top:2926px;width:25px;height:25px;border-radius:50%;background:#111;"></div>
<div class="b" style="left:3216.0px;top:2906.0px;width:5.0px;height:66.0px;background:#333;"></div>
<svg class="b" style="left:4420.0px;top:2902.0px;" width="76.0" height="76.0" viewBox="0 0 7.6 7.6"><circle cx="3.8" cy="3.8" r="3.3" fill="#fff" stroke="#d8345f" stroke-width="0.7"/><path d="M2.6 2.6 L5 5 M5 2.6 L2.6 5" stroke="#d8345f" stroke-width="0.7"/></svg>
<svg class="b" style="left:4515.0px;top:2907.0px;" width="78.0" height="60.0" viewBox="0 0 7.8 6"><path d="M0.1 3 Q3.9 -2.2 7.7 3 Q3.9 8.2 0.1 3 Z" fill="#0c0c0c"/><circle cx="4.1" cy="3.3" r="1.15" fill="#fff"/></svg>
<div class="b" style="left:2862.0px;top:3065.0px;width:1762.0px;height:112.0px;border:10px solid #a6d6ef;background:#fff;"></div>
<div class="t" style="font-size:60px;color:#a6a6a6;left:2892.0px;top:3069.2px;transform:scaleX(0.9012);">Confirm share password</div>
<div class="b" style="left:2862.0px;top:3248.0px;width:1762.0px;height:109.0px;border:10px solid #a6d6ef;background:#fff;"></div>
<div class="t" style="font-size:60px;color:#a6a6a6;left:2892.0px;top:3249.2px;transform:scaleX(0.9076);">Select file share destination</div>
<div class="b" style="left:2867.0px;top:3426.0px;width:64.0px;height:66.0px;border:4px solid #d4d4d4;background:#fff;"></div>
<svg class="b" style="left:2872.0px;top:3430.0px;" width="60.0" height="54.0" viewBox="0 0 6 5.4"><path d="M0.5 2.7 L2.2 4.5 L5.5 0.6" fill="none" stroke="#1f9a40" stroke-width="1.45"/></svg>
<div class="t" style="font-size:60px;color:#222;left:2952.0px;top:3409.2px;transform:scaleX(0.9149);">Include GhostVolt Start to the shared files</div>
<div class="b" style="left:2867.0px;top:3525.0px;width:64.0px;height:64.0px;border:4px solid #d4d4d4;background:#fff;"></div>
<div class="t" style="font-size:60px;color:#222;left:2956.0px;top:3509.2px;transform:scaleX(0.8861);">Share files to a Zip file</div>
<div class="b" style="left:3408.0px;top:3762.0px;width:350.0px;height:106.0px;border:5px solid #c6c6c6;background:#f6f6f6;"></div>
<div class="t" style="font-size:60px;color:#222;left:3523.0px;top:3769.2px;transform:scaleX(0.9887);">Help</div>
<div class="b" style="left:3783.0px;top:3762.0px;width:349.0px;height:106.0px;border:5px solid #c6c6c6;background:#f6f6f6;"></div>
<div class="t" style="font-size:60px;color:#222;left:3875.5px;top:3769.2px;transform:scaleX(0.8727);">Cancel</div>
<div class="b" style="left:4158.0px;top:3762.0px;width:480.0px;height:106.0px;background:#11a0ec;"></div>
<div class="t" style="font-size:60px;color:#fff;left:4267.0px;top:3769.2px;transform:scaleX(0.9101);">Share files</div>
<div class="b" style="left:3888.0px;top:3099.0px;width:1497.0px;height:400.0px;background:#fff;box-shadow:0 8px 14px rgba(0,0,0,.35),0 18px 50px rgba(0,0,0,.38),0 0 35px rgba(0,0,0,.22);"></div>
<div class="t" style="font-size:62px;color:#1a1a1a;font-weight:bold;left:3967.0px;top:3148.5px;transform:scaleX(0.9407);">Password strength</div>
<svg class="b" style="left:3962.0px;top:3277.0px;" width="120.0" height="120.0" viewBox="0 0 12 12"><circle cx="6" cy="6" r="5.3" fill="#fff" stroke="#d9305c" stroke-width="1.1"/><path d="M3.9 3.9 L8.1 8.1 M8.1 3.9 L3.9 8.1" stroke="#d9305c" stroke-width="1.2"/></svg>
<div class="t" style="font-size:60px;color:#26303c;left:4113.0px;top:3259.2px;transform:scaleX(0.9041);">This password has previously appeared in a data</div>
<div class="t" style="font-size:60px;color:#26303c;left:4113.0px;top:3329.2px;transform:scaleX(0.9004);">breach and should never be used.</div>
<svg class="b" style="left:4602.0px;top:3843.0px;filter:drop-shadow(8px 10px 7px rgba(0,0,0,.45));" width="80.0" height="90.0" viewBox="0 0 8 9"><path d="M0.3 0.3 L6.7 3.0 L4.3 4.3 L7.1 7.1 L5.8 7.9 L3.2 5.1 L1.8 7.0 Z" fill="#111" stroke="#fff" stroke-width="0.5" stroke-linejoin="round"/></svg>
</div></body></html>
